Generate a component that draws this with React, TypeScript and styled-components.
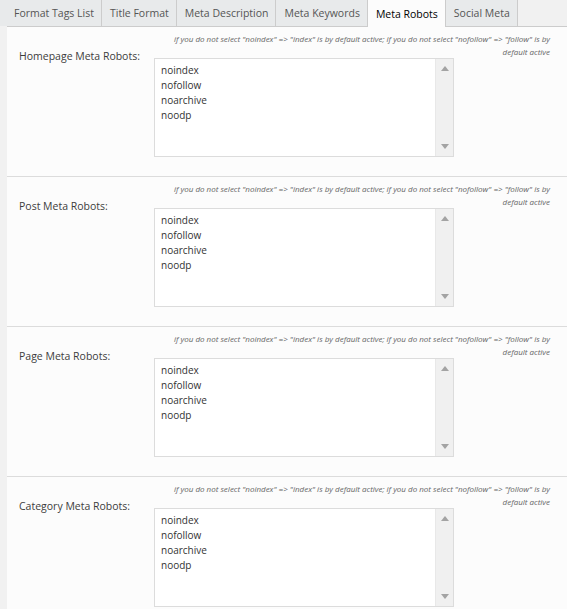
import styled, { createGlobalStyle } from "styled-components";

const GlobalStyle = createGlobalStyle`
  html, body {
    margin: 0;
    padding: 0;
    background: #f1f1f1;
    font-family: "Open Sans", "Liberation Sans", sans-serif;
  }
`;

const tabs = [
  "Format Tags List",
  "Title Format",
  "Meta Description",
  "Meta Keywords",
  "Meta Robots",
  "Social Meta",
];

const robotOptions = ["noindex", "nofollow", "noarchive", "noodp"];

const sections = [
  "Homepage Meta Robots:",
  "Post Meta Robots:",
  "Page Meta Robots:",
  "Category Meta Robots:",
];

interface TabProps {
  $active?: boolean;
}

function Arrow({ down }: { down?: boolean }) {
  return (
    <svg width="8" height="5" viewBox="0 0 8 5">
      <path d={down ? "M0 0 L8 0 L4 5 Z" : "M0 5 L8 5 L4 0 Z"} fill="#a3a3a3" />
    </svg>
  );
}

function RobotsRow({ label }: { label: string }) {
  return (
    <Section>
      <Label>{label}</Label>
      <Note>
        if you do not select "noindex" =&gt; "index" is by default active; if
        you do not select "nofollow" =&gt; "follow" is by
        <br />
        default active
      </Note>
      <Listbox>
        <Options>
          {robotOptions.map((opt) => (
            <Option key={opt}>{opt}</Option>
          ))}
        </Options>
        <ScrollTrack>
          <Arrow />
          <Arrow down />
        </ScrollTrack>
      </Listbox>
    </Section>
  );
}

export default function App() {
  return (
    <>
      <GlobalStyle />
      <Page>
        <TabBar>
          {tabs.map((t) => (
            <Tab key={t} $active={t === "Meta Robots"}>
              {t}
            </Tab>
          ))}
        </TabBar>
        <Panel>
          {sections.map((s) => (
            <RobotsRow key={s} label={s} />
          ))}
        </Panel>
      </Page>
    </>
  );
}

const Page = styled.div`
  width: 567px;
  height: 609px;
  overflow: hidden;
  display: flex;
  flex-direction: column;
`;

const TabBar = styled.div`
  display: flex;
  height: 26px;
  position: relative;
  z-index: 1;
`;

const Tab = styled.div<TabProps>`
  height: ${(p) => (p.$active ? "27px" : "26px")};
  box-sizing: border-box;
  padding: 0 7px 0 8px;
  display: flex;
  align-items: center;
  font-size: 10.5px;
  color: ${(p) => (p.$active ? "#000" : "#555")};
  background: ${(p) => (p.$active ? "#fcfcfc" : "#e8eaeb")};
  border-right: 1px solid #ccc;

  &:first-child {
    padding-left: 14px;
  }
`;

const Panel = styled.div`
  margin-left: 7px;
  background: #fcfcfc;
  border-top: 1px solid #ccc;
  flex: 1;
`;

const Section = styled.div`
  height: 150px;
  box-sizing: border-box;
  border-bottom: 1px solid #dcdcdc;
  padding: 5px 17px 0 12px;
  display: grid;
  grid-template-columns: 135px 1fr;
  grid-template-rows: auto auto;
  align-content: start;
`;

const Label = styled.div`
  grid-row: 1 / span 2;
  padding-top: 17px;
  font-size: 10.5px;
  color: #3c3c3c;
`;

const Note = styled.div`
  text-align: right;
  font-size: 8px;
  line-height: 13px;
  font-style: italic;
  color: #666;
  height: 26px;
`;

const Listbox = styled.div`
  width: 300px;
  height: 99px;
  box-sizing: border-box;
  border: 1px solid #dcdcdc;
  background: #fff;
  display: flex;
`;

const Options = styled.div`
  flex: 1;
  padding: 4px 6px;
`;

const Option = styled.div`
  font-size: 10px;
  line-height: 15px;
  color: #333;
`;

const ScrollTrack = styled.div`
  width: 17px;
  background: #f0f0f0;
  border-left: 1px solid #e8e8e8;
  display: flex;
  flex-direction: column;
  align-items: center;
  justify-content: space-between;
  padding: 7px 0 7px;
`;
